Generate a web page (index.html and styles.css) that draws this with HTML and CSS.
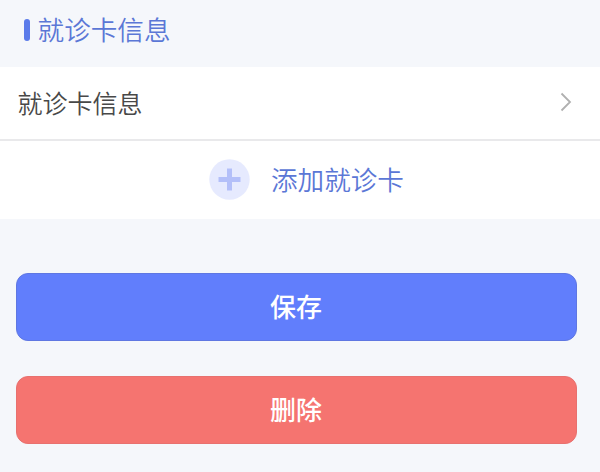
FILE: index.html
```html
<!DOCTYPE html>
<html lang="zh-CN">
<head>
    <meta charset="UTF-8">
    <meta name="viewport" content="width=device-width, initial-scale=1.0">
    <title>就诊卡信息</title>
    <link rel="stylesheet" href="styles.css">
</head>
<body>
    <div class="section-header">
        <span class="header-bar"></span>
        <h2 class="header-title">就诊卡信息</h2>
    </div>

    <div class="card-list">
        <div class="card-row">
            <span class="card-label">就诊卡信息</span>
            <svg class="arrow" width="12" height="20" viewBox="0 0 12 20">
                <path d="M1.5 1.5 L10 10 L1.5 18.5" fill="none" stroke="#b0b0b0" stroke-width="1.8"/>
            </svg>
        </div>
        <div class="add-row">
            <svg class="add-icon" width="41" height="41" viewBox="0 0 41 41">
                <circle cx="20.5" cy="20.5" r="20.2" fill="#e6eafe"/>
                <path d="M20.5 9.5 V31.5 M9.5 20.5 H31.5" stroke="#b3bff9" stroke-width="5"/>
            </svg>
            <span class="add-text">添加就诊卡</span>
        </div>
    </div>

    <div class="actions">
        <button class="btn save-btn">保存</button>
        <button class="btn delete-btn">删除</button>
    </div>
</body>
</html>
```

FILE: styles.css
```css
* {
    margin: 0;
    padding: 0;
    box-sizing: border-box;
}

body {
    font-family: 'Noto Sans CJK SC', sans-serif;
    font-weight: 350;
    background: #f5f7fb;
    height: 472px;
    overflow: hidden;
}

.section-header {
    display: flex;
    align-items: center;
    height: 67px;
    padding: 0 0 8px 24px;
}

.header-bar {
    width: 6px;
    height: 22px;
    border-radius: 3px;
    background: #5b7bea;
}

.header-title {
    margin-left: 7.6px;
    padding-bottom: 1px;
    font-size: 26.6px;
    font-weight: 350;
    line-height: 40px;
    color: #5b77d6;
}

.card-list {
    background: #ffffff;
}

.card-row {
    display: flex;
    align-items: center;
    justify-content: space-between;
    height: 74px;
    padding: 0 28px 2px 17.5px;
    border-bottom: 2px solid #e9e9eb;
}

.card-label {
    font-size: 25px;
    line-height: 38px;
    color: #484848;
}

.add-row {
    display: flex;
    align-items: center;
    height: 78px;
    padding: 0 0 1px 209px;
}

.add-text {
    margin-left: 21px;
    padding-bottom: 1px;
    font-size: 26.6px;
    line-height: 40px;
    color: #5b77d6;
}

.actions {
    display: flex;
    flex-direction: column;
    gap: 35px;
    padding: 53.5px 23px 0 16px;
}

.btn {
    height: 68px;
    padding: 0 1px 2px 0;
    border: 1px solid #5f77e2;
    border-radius: 12px;
    background: #617efc;
    font-family: inherit;
    font-size: 26px;
    font-weight: 500;
    color: #ffffff;
    cursor: pointer;
}

.delete-btn {
    border-color: #e8716f;
    background: #f57470;
}
```
